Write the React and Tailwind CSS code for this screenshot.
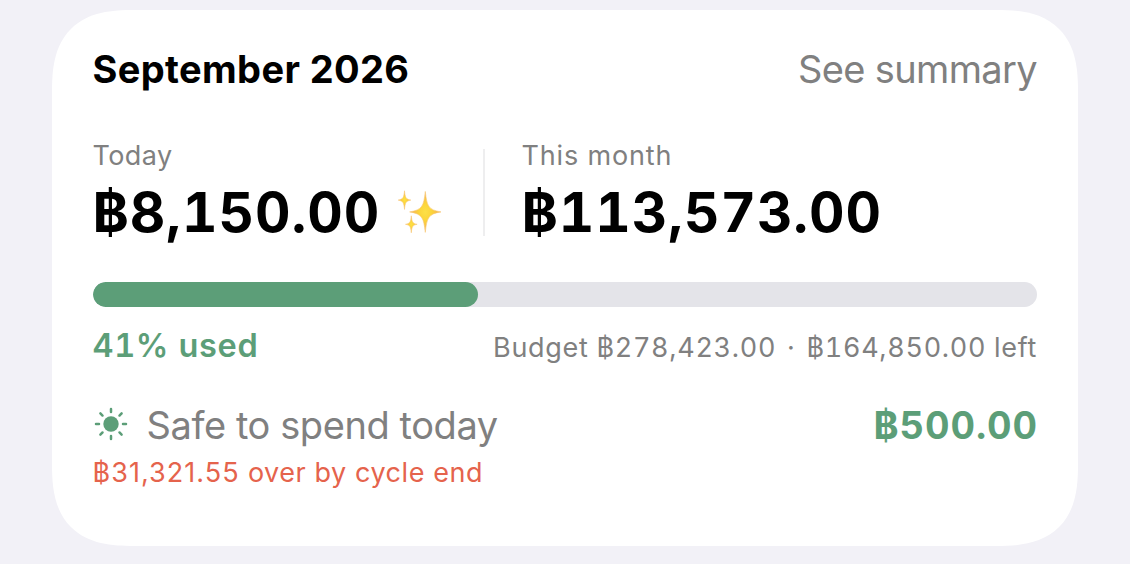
function Sparkles() {
  const star = (x, y, rx, ry) => {
    const a = rx * 0.15;
    const b = ry * 0.1;
    return `M${x} ${y - ry}C${x + a * 0.7} ${y - b * 3} ${x + a * 1.2} ${y - b} ${x + rx} ${y}C${x + a * 1.2} ${y + b} ${x + a * 0.7} ${y + b * 3} ${x} ${y + ry}C${x - a * 0.7} ${y + b * 3} ${x - a * 1.2} ${y + b} ${x - rx} ${y}C${x - a * 1.2} ${y - b} ${x - a * 0.7} ${y - b * 3} ${x} ${y - ry}Z`;
  };
  return (
    <svg viewBox="0 0 44 44" className="h-[44px] w-[44px]" aria-hidden="true">
      <defs>
        <radialGradient id="gold">
          <stop offset="0" stopColor="#fde047" />
          <stop offset="0.4" stopColor="#fcd53a" />
          <stop offset="1" stopColor="#f3ac55" />
        </radialGradient>
      </defs>
      <g fill="url(#gold)" stroke="#f8c774" strokeWidth="0.6" strokeLinejoin="round">
        <path d={star(27.3, 22.9, 15.7, 20.5)} />
        <path d={star(6.5, 11.1, 6.3, 9.3)} />
        <path d={star(13.3, 35.3, 5.8, 8.5)} />
      </g>
    </svg>
  );
}

function Sun() {
  return (
    <svg viewBox="0 0 34 34" className="h-[34px] w-[34px] text-[#5c9e78]" aria-hidden="true">
      <circle cx="17" cy="17" r="7.7" fill="currentColor" />
      <g stroke="currentColor" strokeWidth="2.5" strokeLinecap="round">
        {[0, 45, 90, 135, 180, 225, 270, 315].map((a) => (
          <path key={a} d="M17 2V5" transform={`rotate(${a} 17 17)`} />
        ))}
      </g>
    </svg>
  );
}

export default function App() {
  return (
    <main className="h-[564px] w-[1130px] overflow-hidden bg-[#f2f1f7] pt-[10px] pl-[51.5px] font-['Inter',sans-serif] whitespace-nowrap text-[#808080]">
      <section className="flex h-[535.5px] w-[1026.5px] flex-col rounded-[82px] bg-white px-[41px] pt-[34px] [corner-shape:superellipse(1.4)]">
        <header className="flex h-[50px] items-center justify-between leading-[50px]">
          <h1 className="text-[38px] font-bold tracking-[0.38px] text-black">September 2026</h1>
          <span className="text-[38px] tracking-[-0.64px]">See summary</span>
        </header>

        <div className="mt-[42px] flex h-[110px]">
          <div className="flex w-[390px] flex-col">
            <span className="h-[40px] text-[27px] leading-[40px] tracking-[0.4px]">Today</span>
            <div className="flex h-[70px] items-center">
              <strong className="w-[305px] pt-[2px] text-[55px] leading-[70px] font-bold tracking-[0.95px] text-black tabular-nums">฿8,150.00</strong>
              <Sparkles />
            </div>
          </div>
          <div className="mt-[13px] h-[87px] w-[2px] bg-[#eeeeef]" />
          <div className="flex flex-col pl-[37px]">
            <span className="h-[40px] text-[27px] leading-[40px] tracking-[0.85px]">This month</span>
            <strong className="pt-[1px] text-[55px] leading-[70px] font-bold tracking-[0.92px] text-black tabular-nums">฿113,573.00</strong>
          </div>
        </div>

        <div className="mt-[36px] h-[25px] shrink-0 overflow-hidden rounded-full bg-[#e4e4e9]">
          <div className="h-full w-[385px] rounded-full bg-[#5c9e78]" />
        </div>

        <div className="mt-[18px] flex h-[42px] items-center justify-between leading-[42px]">
          <span className="text-[32.5px] font-semibold tracking-[0.65px] text-[#5c9e78] tabular-nums">41% used</span>
          <span className="pt-[3px] text-[27px] tracking-[0.68px] tabular-nums">
            Budget ฿278,423.00<span className="px-[3px]"> · </span>฿164,850.00 left
          </span>
        </div>

        <div className="mt-[32px] flex h-[50px] items-center justify-between leading-[50px]">
          <div className="flex items-center gap-[19px] pl-[1px]">
            <Sun />
            <span className="pt-[1px] text-[38px] tracking-[-0.42px]">Safe to spend today</span>
          </div>
          <span className="-mr-[1px] pt-[2px] text-[38px] font-bold tracking-[0.9px] text-[#5c9e78] tabular-nums">฿500.00</span>
        </div>
        <p className="mt-[4px] text-[27px] leading-[40px] tracking-[0.56px] text-[#e5634c]"><span className="tracking-[1.05px]">฿31,321.55</span> over by cycle end</p>
      </section>
    </main>
  );
}
